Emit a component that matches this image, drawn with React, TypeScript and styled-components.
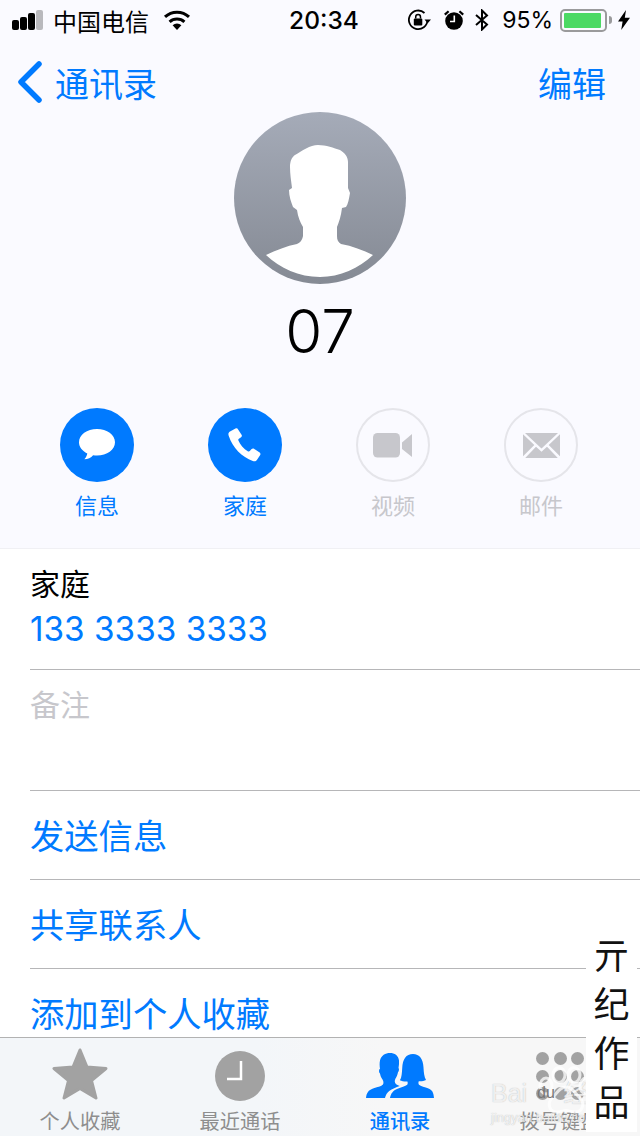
import React from "react";
import styled, { createGlobalStyle } from "styled-components";

const FONT = `Inter, "Noto Sans CJK SC", "Noto Sans", sans-serif`;
const BLUE = "#007aff";

const GlobalStyle = createGlobalStyle`
  html, body {
    margin: 0;
    padding: 0;
    background: #fff;
  }
  body {
    font-family: ${FONT};
  }
`;

const Page = styled.div`
  position: relative;
  width: 640px;
  height: 1136px;
  overflow: hidden;
  display: flex;
  flex-flow: column;
  background: #fff;
`;

const Header = styled.div`
  height: 548px;
  flex: none;
  background: #fafaff;
  border-bottom: 1px solid #f0f0f4;
  display: flex;
  flex-flow: column;
`;

const StatusBar = styled.div`
  height: 40px;
  display: flex;
  align-items: center;
  padding: 0 10px 0 12px;
  color: #000;
`;

const StatusSide = styled.div<{ $right?: boolean }>`
  flex: 1;
  display: flex;
  align-items: center;
  justify-content: ${(p) => (p.$right ? "flex-end" : "flex-start")};
`;

const StatusIcon = styled.div<{ $gap: number }>`
  display: flex;
  margin-right: ${(p) => p.$gap}px;
`;

const Signal = styled.div`
  display: flex;
  align-items: flex-end;
  gap: 1.5px;
  width: 33px;
  height: 20px;
  margin-right: 8px;
`;

const SignalBar = styled.div<{ $h: number; $off?: boolean }>`
  width: 6.5px;
  height: ${(p) => p.$h}px;
  border-radius: 2px;
  background: ${(p) => (p.$off ? "#b9b9bd" : "#000")};
`;

const Carrier = styled.span`
  font-size: 24px;
  font-weight: 400;
  margin-right: 14px;
`;

const Time = styled.span`
  font-size: 24.5px;
  font-weight: 500;
  margin-left: 6px;
`;

const Percent = styled.span`
  font-size: 23px;
  font-weight: 400;
  margin: 0 7px 0 13px;
`;

const Battery = styled.div`
  width: 47px;
  height: 23px;
  box-sizing: border-box;
  border: 2px solid #9a9a9c;
  border-radius: 5px;
  padding: 2px;
`;

const BatteryFill = styled.div`
  height: 100%;
  width: 95%;
  border-radius: 1px;
  background: #4cd964;
`;

const BatteryTip = styled.div`
  width: 3px;
  height: 8px;
  margin: 0 6px 0 2px;
  border-radius: 0 3px 3px 0;
  background: #9a9a9c;
`;

const NavBar = styled.div`
  height: 88px;
  margin-top: -2px;
  display: flex;
  align-items: center;
  justify-content: space-between;
  padding: 0 34px 0 18px;
  color: ${BLUE};
  font-size: 34px;
  font-weight: 400;
`;

const NavBack = styled.div`
  display: flex;
  align-items: center;
  gap: 13px;
`;

const AvatarWrap = styled.div`
  display: flex;
  justify-content: center;
  margin-top: -14px;
`;

const Avatar = styled.div`
  width: 172px;
  height: 172px;
  border-radius: 50%;
  overflow: hidden;
  background: linear-gradient(#a5abb8, #858a94);
`;

const Name = styled.div`
  text-align: center;
  font-size: 60px;
  line-height: 72px;
  margin-top: 11px;
  font-weight: 300;
  color: #000;
`;

const Actions = styled.div`
  display: grid;
  grid-template-columns: repeat(4, 148px);
  padding-left: 23px;
  margin-top: 41px;
`;

const Action = styled.div`
  display: flex;
  flex-flow: column;
  align-items: center;
`;

const ActionCircle = styled.div<{ $off?: boolean }>`
  width: 74px;
  height: 74px;
  box-sizing: border-box;
  border-radius: 50%;
  display: flex;
  align-items: center;
  justify-content: center;
  background: ${(p) => (p.$off ? "transparent" : BLUE)};
  border: ${(p) => (p.$off ? "2px solid #e5e5ea" : "none")};
`;

const ActionLabel = styled.div<{ $off?: boolean }>`
  font-size: 22px;
  line-height: 30px;
  margin-top: 9px;
  color: ${(p) => (p.$off ? "#c7c7cc" : BLUE)};
`;

const List = styled.div`
  flex: 1;
  min-height: 0;
  overflow: hidden;
  padding-left: 30px;
`;

const PhoneRow = styled.div`
  height: 121px;
  box-sizing: border-box;
  padding-top: 17px;
  border-bottom: 1px solid #b6b6b8;
`;

const PhoneLabel = styled.div`
  font-size: 30px;
  line-height: 36px;
  color: #000;
`;

const PhoneNumber = styled.div`
  font-size: 33.3px;
  line-height: 50px;
  margin-top: 2px;
  color: ${BLUE};
`;

const NoteRow = styled.div`
  height: 121px;
  box-sizing: border-box;
  padding-top: 17px;
  font-size: 30px;
  line-height: 36px;
  color: #c7c7cc;
  border-bottom: 1px solid #b6b6b8;
`;

const LinkRow = styled.div`
  height: 89px;
  box-sizing: border-box;
  padding-bottom: 2px;
  flex: none;
  display: flex;
  align-items: center;
  font-size: 34.3px;
  color: ${BLUE};
  border-bottom: 1px solid #b6b6b8;
`;

const TabBar = styled.div`
  height: 99px;
  flex: none;
  box-sizing: border-box;
  border-top: 1.5px solid #b2b2b2;
  background: linear-gradient(90deg, #f3f6f9, #f3f6f9 40%, #f7f7f7 60%);
  display: grid;
  grid-template-columns: repeat(4, 160px);
`;

const Tab = styled.div`
  display: flex;
  flex-flow: column;
  align-items: center;
`;

const TabIcon = styled.div<{ $top: number }>`
  height: 71px;
  box-sizing: border-box;
  padding-top: ${(p) => p.$top}px;
  display: flex;
  align-items: flex-start;
  justify-content: center;
`;

const TabLabel = styled.div<{ $active?: boolean }>`
  font-size: 20.2px;
  line-height: 26px;
  font-weight: ${(p) => (p.$active ? 500 : 400)};
  color: ${(p) => (p.$active ? BLUE : "#8e8e8e")};
`;

const KeypadGrid = styled.div`
  display: grid;
  grid-template-columns: repeat(3, 13px);
  grid-auto-rows: 13px;
  gap: 4.5px;
`;

const KeypadDot = styled.div`
  border-radius: 50%;
  background: #a2a2a2;
`;

const Stamp = styled.div`
  position: absolute;
  left: 586px;
  top: 932px;
  width: 51px;
  height: 200px;
  background: #fff;
  display: flex;
  flex-flow: column;
  align-items: center;
  color: #111;
  font-size: 36px;
  line-height: 49px;
  font-weight: 400;
`;

const BaiduMark = styled.div`
  position: absolute;
  left: 491px;
  top: 1079px;
  width: 120px;
  color: rgba(255, 255, 255, 0.78);
  text-shadow: 0 0 1px rgba(130, 130, 130, 0.6);
  font-family: "Liberation Sans", "Noto Sans CJK SC", sans-serif;
`;

const BaiduTitle = styled.div`
  display: flex;
  gap: 36px;
  font-size: 25px;
  line-height: 28px;
  white-space: nowrap;
`;

const BaiduDu = styled.span`
  position: absolute;
  left: 46px;
  top: 4px;
  font-size: 16px;
  line-height: 20px;
  color: #777;
  text-shadow: none;
`;

const BaiduUrl = styled.div`
  font-size: 13px;
  line-height: 16px;
  margin-top: 3px;
  white-space: nowrap;
`;

const BaiduPaw = styled.svg`
  position: absolute;
  left: 44px;
  top: -13px;
`;

function WifiIcon() {
  return (
    <svg width="28" height="20" viewBox="0 0 28 20">
      <path d="M14 20 9.600 15.200a6.600 6.600 0 0 1 8.800 0Z" fill="#000" />
      <path d="M6.600 11.900a11 11 0 0 1 14.800 0" stroke="#000" strokeWidth="3" fill="none" />
      <path d="M2 6.900a17.600 17.600 0 0 1 24 0" stroke="#000" strokeWidth="3" fill="none" />
    </svg>
  );
}

function RotationLockIcon() {
  return (
    <svg width="23" height="22" viewBox="0 0 23 22">
      <path d="M19.500 11a9.300 9.300 0 1 1-3-7" stroke="#000" strokeWidth="1.800" fill="none" />
      <path d="M16.500 10.500H23l-3.300 3.800Z" fill="#000" />
      <rect x="5.800" y="9.500" width="8.500" height="7" rx="1" fill="#000" />
      <path d="M7.700 9.500V8a2.400 2.400 0 0 1 4.800 0v1.500" stroke="#000" strokeWidth="1.500" fill="none" />
    </svg>
  );
}

function AlarmIcon() {
  return (
    <svg width="20" height="20" viewBox="0 0 20 20">
      <circle cx="10" cy="11" r="8.800" fill="#000" />
      <path d="M.8 4.600 4.600 1.200M19.200 4.600 15.400 1.200" stroke="#000" strokeWidth="2.200" />
      <path d="M10.300 5.500v6H6" stroke="#fff" strokeWidth="1.600" fill="none" />
    </svg>
  );
}

function BluetoothIcon() {
  return (
    <svg width="14" height="22" viewBox="0 0 14 22">
      <path d="M1 6l11 9.500L7 20.500V1.500l5 5L1 16" stroke="#000" strokeWidth="2" fill="none" />
    </svg>
  );
}

function BoltIcon() {
  return (
    <svg width="12" height="20" viewBox="0 0 12 20">
      <path d="M8 0 0 11.500h4.600L3.200 20 12 7.800H6.800Z" fill="#000" />
    </svg>
  );
}

function ChevronIcon() {
  return (
    <svg width="24" height="42" viewBox="0 0 24 42">
      <path d="M21 3 3 21l18 18" stroke={BLUE} strokeWidth="5.500" strokeLinecap="round" strokeLinejoin="round" fill="none" />
    </svg>
  );
}

function PersonIcon() {
  return (
    <svg width="172" height="172" viewBox="0 0 172 172">
      <path
        fill="#fff"
        d="M32 143 C42 138 53 134 63 132 C67 130 68 128 69 124 L69 115 C66 110 64 105 63 98 L59 95 C57 90 55 84 55 78 L58 76 C57 68 56 62 56 55 C56 49 58 45 61 43 C68 39 76 33 84 33 C92 33 100 36 106 38 C111 41 114 45 114 50 L114 76 L116 81 C115 87 114 92 112 95 L108 96 C107 104 105 110 103 115 L103 124 C103 128 104 130 107 132 C118 134 129 138 139 143 C125 156 106 165 86 165 C65 165 46 156 32 143 Z"
      />
    </svg>
  );
}

function MessageIcon() {
  return (
    <svg width="36" height="32" viewBox="0 0 36 32">
      <path fill="#fff" d="M18 0C8 0 0 5.900 0 13.200c0 4.700 3.300 8.800 8.300 11.200-.4 2.300-2 4.800-2.900 5.800 3.400 0 6.700-1.500 8.700-4 1.300.2 2.600.3 3.900.3 10 0 18-5.900 18-13.300S28 0 18 0Z" />
    </svg>
  );
}

function PhoneIcon() {
  return (
    <svg width="34" height="34" viewBox="0 0 34 34">
      <path fill="#fff" d="M7.500.6 2 3.600C.4 4.500.1 6 .7 7.800c2 6 5.300 11.500 9.400 15.700 4.200 4.200 9.300 7.600 14.700 9.500 1.800.6 3.200.3 4.100-1l3.300-5c.5-.9.3-1.800-.5-2.400l-5.700-3.800c-.8-.5-1.700-.4-2.400.3l-1.800 2c-.5.5-1.100.6-1.700.3-2.300-1.300-4.300-3-6-5-1.600-1.900-2.800-3.900-3.700-6-.3-.7-.1-1.300.5-1.700l2.200-1.500c.8-.6 1-1.400.6-2.300L10.100 1.400C9.600.4 8.500.1 7.500.6Z" />
    </svg>
  );
}

function VideoIcon() {
  return (
    <svg width="40" height="25" viewBox="0 0 40 25">
      <rect x="0" y="0" width="27" height="24.500" rx="4.500" fill="#c7c7cc" />
      <path d="M29 9.500 39 1v23l-10-8Z" fill="#c7c7cc" />
    </svg>
  );
}

function MailIcon() {
  return (
    <svg width="37" height="25" viewBox="0 0 37 25">
      <path fill="#c7c7cc" d="M2 0h33L18.500 15.500Z" />
      <path fill="#c7c7cc" d="M0 1.200 11.300 12 0 23.300ZM37 1.200 25.700 12 37 23.300Z" />
      <path fill="#c7c7cc" d="M2.200 25 13 13.700l5.500 5 5.500-5L34.800 25Z" />
    </svg>
  );
}

function StarIcon() {
  return (
    <svg width="56" height="54" viewBox="0 0 56 54">
      <path
        d="M28 3 35 20l19 1.500-14.500 12L44 51 28 41.500 12 51l4.500-17.500L2 21.500 21 20Z"
        fill="#a2a2a2"
        stroke="#a2a2a2"
        strokeWidth="3"
        strokeLinejoin="round"
      />
    </svg>
  );
}

function ClockIcon() {
  return (
    <svg width="50" height="50" viewBox="0 0 50 50">
      <circle cx="25" cy="25" r="25" fill="#a2a2a2" />
      <path d="M26 10v18H12" stroke="#fff" strokeWidth="2.500" fill="none" />
    </svg>
  );
}

function ContactsIcon() {
  return (
    <svg width="68" height="45" viewBox="0 0 68 45">
      <path
        fill={BLUE}
        d="M0 45c.5-5 2.500-8 7-9.500 4-1.300 8.500-2.300 10-4 .8-1.500.5-3.500-.5-5-1.500-2-2-3.500-2.500-6-1-.5-1.200-3-.7-4 .2-.5.5-.6.7-.6-.4-3-.6-6 0-8.500C15 2.500 19.500 0 24 0c4.500 0 8.500 2.500 9 7.400.2 2.600 0 5-.5 7.600.8.600.6 3.500-.5 4.300-.5 2.500-1.300 4.500-2.600 6.400-1 2-.7 4 .3 5 1 1 2.500 1.700 4 2.300-3.500 1.400-7.500 2.700-10.500 5-2.200 1.800-3.500 4-4.200 7Z"
      />
      <path
        fill={BLUE}
        d="M24 45c.8-4.500 3-7.500 7.500-9.300 3.500-1.300 8-2.300 9.700-3.900.7-1 .6-2.300.2-3.300-2.700.2-5.500-.2-7.500-1.300 1.800-2.700 2-7 2.300-12C36.700 6 40 1 47 1c6.500 0 10 5 10.500 13.500.3 5 .7 9.500 2.500 12.500-2 1.200-4.700 1.500-7.200 1.300-.5 1-.5 2.500.2 3.500 1.700 1.500 6 2.500 9.500 3.800C67 37.500 67.500 40.500 68 45Z"
      />
    </svg>
  );
}

const actions = [
  { label: "信息", off: false, icon: <MessageIcon /> },
  { label: "家庭", off: false, icon: <PhoneIcon /> },
  { label: "视频", off: true, icon: <VideoIcon /> },
  { label: "邮件", off: true, icon: <MailIcon /> },
];

export default function App() {
  return (
    <>
      <GlobalStyle />
      <Page>
        <Header>
          <StatusBar>
            <StatusSide>
              <Signal>
                <SignalBar $h={10} />
                <SignalBar $h={13} />
                <SignalBar $h={17} />
                <SignalBar $h={20} $off />
              </Signal>
              <Carrier>中国电信</Carrier>
              <WifiIcon />
            </StatusSide>
            <Time>20:34</Time>
            <StatusSide $right>
              <StatusIcon $gap={13}>
                <RotationLockIcon />
              </StatusIcon>
              <StatusIcon $gap={11}>
                <AlarmIcon />
              </StatusIcon>
              <BluetoothIcon />
              <Percent>95%</Percent>
              <Battery>
                <BatteryFill />
              </Battery>
              <BatteryTip />
              <BoltIcon />
            </StatusSide>
          </StatusBar>
          <NavBar>
            <NavBack>
              <ChevronIcon />
              <span>通讯录</span>
            </NavBack>
            <span>编辑</span>
          </NavBar>
          <AvatarWrap>
            <Avatar>
              <PersonIcon />
            </Avatar>
          </AvatarWrap>
          <Name>07</Name>
          <Actions>
            {actions.map((item) => (
              <Action key={item.label}>
                <ActionCircle $off={item.off}>{item.icon}</ActionCircle>
                <ActionLabel $off={item.off}>{item.label}</ActionLabel>
              </Action>
            ))}
          </Actions>
        </Header>
        <List>
          <PhoneRow>
            <PhoneLabel>家庭</PhoneLabel>
            <PhoneNumber>133 3333 3333</PhoneNumber>
          </PhoneRow>
          <NoteRow>备注</NoteRow>
          <LinkRow>发送信息</LinkRow>
          <LinkRow>共享联系人</LinkRow>
          <LinkRow>添加到个人收藏</LinkRow>
        </List>
        <TabBar>
          <Tab>
            <TabIcon $top={9}>
              <StarIcon />
            </TabIcon>
            <TabLabel>个人收藏</TabLabel>
          </Tab>
          <Tab>
            <TabIcon $top={13}>
              <ClockIcon />
            </TabIcon>
            <TabLabel>最近通话</TabLabel>
          </Tab>
          <Tab>
            <TabIcon $top={15}>
              <ContactsIcon />
            </TabIcon>
            <TabLabel $active>通讯录</TabLabel>
          </Tab>
          <Tab>
            <TabIcon $top={14}>
              <KeypadGrid>
                {Array.from({ length: 9 }).map((_, i) => (
                  <KeypadDot key={i} />
                ))}
              </KeypadGrid>
            </TabIcon>
            <TabLabel>拨号键盘</TabLabel>
          </Tab>
        </TabBar>
        <BaiduMark>
          <BaiduPaw width="62" height="52" viewBox="0 0 62 52">
            <g fill="none" stroke="rgba(255,255,255,0.75)" strokeWidth="3">
              <ellipse cx="11" cy="20" rx="6" ry="8" />
              <ellipse cx="24" cy="9" rx="6" ry="7.500" />
              <ellipse cx="39" cy="9" rx="6" ry="7.500" />
              <ellipse cx="51" cy="20" rx="6" ry="8" />
              <path d="M31 21c-7 0-9 7-14 11-5 5-3 15 6 14 4-.5 5-1.500 8-1.500s4 1 8 1.500c9 1 11-9 6-14-5-4-7-11-14-11Z" />
            </g>
          </BaiduPaw>
          <BaiduDu>du</BaiduDu>
          <BaiduTitle>
            <span>Bai</span>
            <span>经验</span>
          </BaiduTitle>
          <BaiduUrl>jingyan.baidu.com</BaiduUrl>
        </BaiduMark>
        <Stamp>
          <span>亓</span>
          <span>纪</span>
          <span>作</span>
          <span>品</span>
        </Stamp>
      </Page>
    </>
  );
}
